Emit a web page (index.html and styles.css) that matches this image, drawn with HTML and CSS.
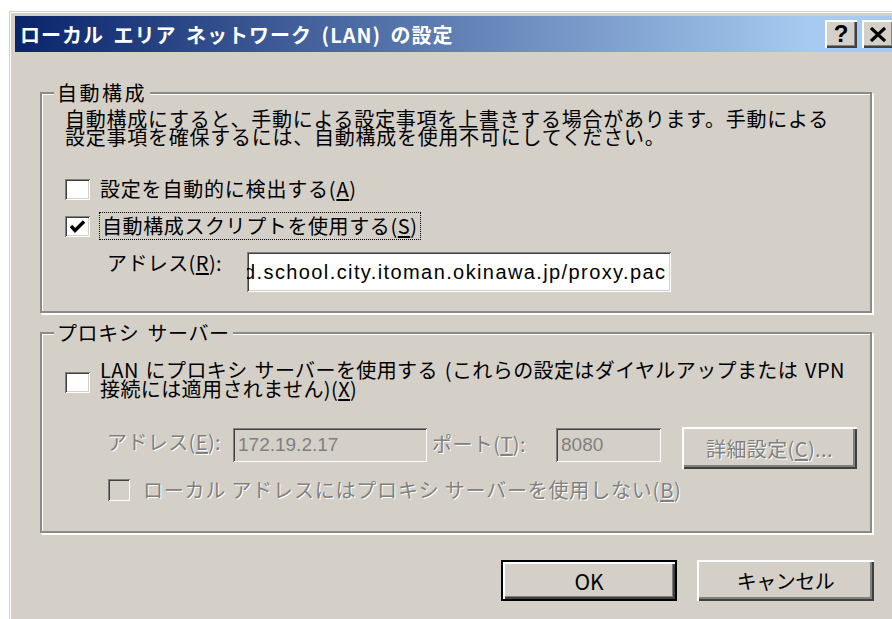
FILE: index.html
```html
<!DOCTYPE html>
<html lang="ja">
<head>
<meta charset="utf-8">
<title>ローカル エリア ネットワーク (LAN) の設定</title>
<link rel="stylesheet" href="styles.css">
</head>
<body>
<div class="window">
  <div class="titlebar">
    <span class="title">ローカル エリア ネットワーク (LAN) の設定</span>
    <div class="caption-buttons">
      <span class="cap-btn help">?</span>
      <span class="cap-btn close">
        <svg width="16" height="15" viewBox="0 0 16 15"><path d="M1 1 L15 14 M15 1 L1 14" stroke="#000" stroke-width="3.2" fill="none"/></svg>
      </span>
    </div>
  </div>

  <div class="client">
    <fieldset class="group group-auto">
      <legend>自動構成</legend>
      <p class="note">自動構成にすると、手動による設定事項を上書きする場合があります。手動による<br>設定事項を確保するには、自動構成を使用不可にしてください。</p>

      <div class="check row-detect">
        <span class="box"></span>
        <span class="check-text">設定を自動的に検出する(<u>A</u>)</span>
      </div>

      <div class="check row-script">
        <span class="box">
          <svg width="15" height="13" viewBox="0 0 15 13"><path d="M1 6 L5 10.5 L14 1.5" stroke="#000" stroke-width="3.4" fill="none"/></svg>
        </span>
        <span class="check-text focus">自動構成スクリプトを使用する(<u>S</u>)</span>
      </div>

      <div class="field row-url">
        <span class="field-label label-url">アドレス(<u>R</u>):</span>
        <div class="edit edit-url"><span class="edit-text">d.school.city.itoman.okinawa.jp/proxy.pac</span></div>
      </div>
    </fieldset>

    <fieldset class="group group-proxy">
      <legend>プロキシ サーバー</legend>

      <div class="check row-proxy">
        <span class="box"></span>
        <span class="check-text two-line">LAN にプロキシ サーバーを使用する (これらの設定はダイヤルアップまたは VPN<br>接続には適用されません)(<u>X</u>)</span>
      </div>

      <div class="field row-server">
        <span class="field-label label-server disabled">アドレス(<u>E</u>):</span>
        <div class="edit edit-server disabled-edit"><span class="edit-text">172.19.2.17</span></div>
        <span class="field-label label-port disabled">ポート(<u>T</u>):</span>
        <div class="edit edit-port disabled-edit"><span class="edit-text">8080</span></div>
        <span class="button btn-advanced"><span class="disabled">詳細設定(<u>C</u>)...</span></span>
      </div>

      <div class="check row-bypass">
        <span class="box box-disabled"></span>
        <span class="check-text disabled">ローカル アドレスにはプロキシ サーバーを使用しない(<u>B</u>)</span>
      </div>
    </fieldset>

    <div class="actions">
      <span class="button btn-ok">OK</span>
      <span class="button btn-cancel">キャンセル</span>
    </div>
  </div>
</div>
</body>
</html>
```

FILE: styles.css
```css
html, body {
  margin: 0;
  padding: 0;
  background: #fff;
}

body {
  width: 892px;
  height: 619px;
  overflow: hidden;
  font-family: "Noto Sans CJK JP", sans-serif;
  font-size: 20px;
  color: #000;
}

u {
  text-decoration: underline;
  text-underline-offset: 2px;
}

/* ---- window frame ---- */
.window {
  margin: 11px 0 0 9px;
  width: 900px;
  height: 620px;
  box-sizing: border-box;
  border: 1px solid #d4d0c8;
  box-shadow: inset 1px 1px 0 #fff;
  background: #d4d0c8;
  padding: 4px 0 0 5px;
}

.titlebar {
  width: 883px;
  height: 36px;
  box-sizing: border-box;
  padding: 0 4px 0 5px;
  display: flex;
  align-items: center;
  background: linear-gradient(to right, #0a246a 0%, #a6caf0 90%, #a6caf0 100%);
}

.title {
  color: #fff;
  font-weight: bold;
  font-size: 20px;
  letter-spacing: 1px;
  word-spacing: 4px;
  white-space: nowrap;
}

.caption-buttons {
  margin-left: auto;
  display: flex;
  gap: 5px;
}

.cap-btn {
  width: 32px;
  height: 28px;
  box-sizing: border-box;
  display: flex;
  align-items: center;
  justify-content: center;
  background: #d4d0c8;
  box-shadow: inset 2px 2px 0 #fff, inset -2px -2px 0 #404040, inset -3px -3px 0 #808080;
}

.cap-btn.help {
  font-family: "Liberation Sans", sans-serif;
  font-weight: bold;
  font-size: 24px;
  line-height: 1;
}

/* ---- client area ---- */
.client {
  padding: 31px 0 0 25px;
}

.group {
  width: 832px;
  box-sizing: border-box;
  margin: 0;
  border: 2px solid #8c8a86;
  box-shadow: inset 1px 1px 0 #fff, 1px 1px 0 #fff, 2px 2px 0 #fff;
  padding: 0 0 0 23px;
  min-width: 0;
}

.group legend {
  margin-left: -11px;
  padding: 0 3px;
  line-height: 20px;
  letter-spacing: 0.6px;
  word-spacing: 3px;
  background: #d4d0c8;
}

.group-auto legend {
  letter-spacing: 2.5px;
}

.group-auto {
  padding-top: 7px;
  padding-bottom: 19px;
}

.group-proxy {
  margin-top: 10px;
  padding-top: 17px;
  padding-bottom: 30px;
}

.note {
  margin: 0;
  line-height: 18px;
  letter-spacing: 0.75px;
  white-space: nowrap;
}

/* ---- check boxes ---- */
.check {
  display: flex;
  align-items: center;
  gap: 10px;
}

.box {
  width: 25px;
  height: 21px;
  box-sizing: border-box;
  flex: none;
  display: flex;
  align-items: center;
  justify-content: center;
  background: #fff;
  box-shadow: inset 1px 1px 0 #808080, inset -1px -1px 0 #fff,
              inset 2px 2px 0 #404040, inset -2px -2px 0 #d4d0c8;
}

.box-disabled {
  width: 22px;
  height: 22px;
  background: #d4d0c8;
}

.check-text {
  line-height: 22px;
  letter-spacing: 0.8px;
  white-space: nowrap;
}

.row-detect {
  margin-top: 32px;
  height: 22px;
}

.row-script {
  margin-top: 12px;
  height: 28px;
}

.check-text.focus {
  margin-left: -1px;
  padding: 0 2px;
  line-height: 26px;
  letter-spacing: 0.6px;
  border: 1px dotted #000;
}

.row-proxy {
  align-items: center;
}

.row-proxy .box {
  margin-top: 6px;
}

.check-text.two-line {
  line-height: 19px;
  letter-spacing: 0.4px;
  word-spacing: 2px;
}

.row-bypass {
  margin-top: 10px;
  margin-left: 43px;
  height: 22px;
  gap: 13px;
}

/* ---- labelled edit boxes ---- */
.field {
  display: flex;
  align-items: flex-start;
}

.field-label {
  line-height: 20px;
  letter-spacing: 0.4px;
  white-space: nowrap;
  flex: none;
}

.row-url {
  margin-top: 12px;
  padding-left: 42px;
}

.label-url {
  width: 140px;
  margin-top: 1px;
}

.edit {
  box-sizing: border-box;
  flex: none;
  overflow: hidden;
  display: flex;
  align-items: center;
  background: #fff;
  box-shadow: inset 1px 1px 0 #808080, inset -1px -1px 0 #fff,
              inset 2px 2px 0 #404040, inset -2px -2px 0 #d4d0c8;
  font-family: "Liberation Sans", sans-serif;
  white-space: nowrap;
}

.edit-url {
  width: 424px;
  height: 40px;
  padding-left: 0;
  font-size: 20px;
  letter-spacing: 1.4px;
}

.edit-url .edit-text {
  margin-left: -3px;
}

.row-server {
  margin-top: 29px;
  padding-left: 42px;
  height: 42px;
}

.label-server {
  width: 126px;
  margin-top: 5px;
}

.label-port {
  margin-left: 5px;
  width: 124px;
  margin-top: 7px;
}

.disabled-edit {
  background: #d4d0c8;
  color: #808080;
  height: 34px;
  margin-top: 1px;
  font-size: 19px;
  padding-left: 5px;
}

.edit-server {
  width: 194px;
}

.edit-port {
  width: 105px;
}

.disabled {
  color: #808080;
  text-shadow: 1px 1px 0 #fff;
}

/* ---- push buttons ---- */
.button {
  box-sizing: border-box;
  display: flex;
  align-items: center;
  justify-content: center;
  background: #d4d0c8;
  box-shadow: inset 2px 2px 0 #fff, inset -2px -2px 0 #404040, inset -4px -4px 0 #808080;
  white-space: nowrap;
}

.btn-advanced {
  margin-left: 21px;
  width: 175px;
  height: 42px;
  letter-spacing: 0.4px;
}

.actions {
  width: 834px;
  margin-top: 27px;
  display: flex;
  justify-content: flex-end;
  gap: 20px;
}

.btn-ok,
.btn-cancel {
  width: 177px;
  height: 41px;
}

.btn-ok {
  width: 176px;
  border: 2px solid #000;
  box-shadow: inset 2px 2px 0 #fff, inset -2px -2px 0 #404040, inset -3px -3px 0 #808080;
  font-size: 21px;
}

.btn-cancel {
  letter-spacing: -0.5px;
}
```
